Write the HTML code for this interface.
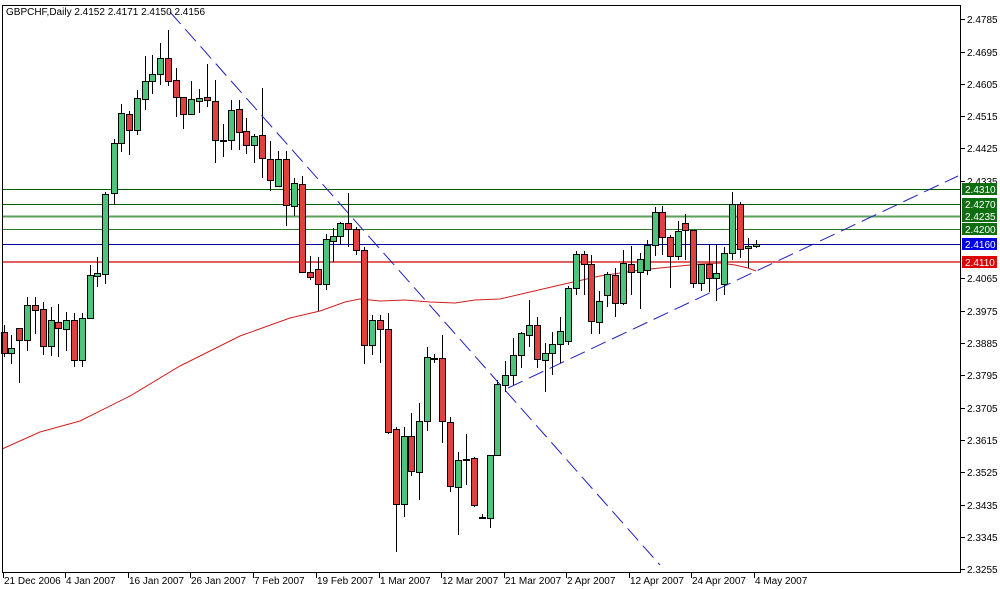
<!DOCTYPE html>
<html><head><meta charset="utf-8"><style>
html,body{margin:0;padding:0;background:#fff;width:1000px;height:589px;overflow:hidden}
svg{display:block}
text{font-family:"Liberation Sans",sans-serif;font-size:10px;fill:#000}
</style></head><body>
<svg id="s" width="1000" height="589" viewBox="0 0 1000 589" xmlns="http://www.w3.org/2000/svg" shape-rendering="crispEdges">
<rect x="0" y="0" width="1000" height="589" fill="#fff"/>
<g id="lines">
<line x1="2" y1="189.5" x2="961" y2="189.5" stroke="#006000"/>
<line x1="2" y1="204.5" x2="961" y2="204.5" stroke="#006000"/>
<line x1="2" y1="216.5" x2="961" y2="216.5" stroke="#5aa05a" stroke-width="2"/>
<line x1="2" y1="229.5" x2="961" y2="229.5" stroke="#2a7a2a"/>
<line x1="2" y1="244.5" x2="961" y2="244.5" stroke="#0000a0"/>
<line x1="2" y1="262" x2="961" y2="262" stroke="#e06060" stroke-width="2"/>
</g>
<polyline shape-rendering="auto" fill="none" stroke="#d02020" stroke-width="1" points="2,449 40,432 80,421 130,396 180,366 240,336 290,318 320,311 345,302 360,299 380,301 405,300 430,302 455,303 475,300 500,299 530,292 560,285 600,276 640,270 680,266 700,264 720,263 735,265 748,268 756,271"/>
<g id="c"></g>
<line shape-rendering="auto" x1="170" y1="12" x2="660" y2="565" stroke="#2020c0" stroke-dasharray="16,7"/>
<line shape-rendering="auto" x1="508" y1="388" x2="958" y2="176" stroke="#2020c0" stroke-dasharray="16,7"/>
<rect x="2.5" y="5.5" width="958" height="567" fill="none" stroke="#000"/>
<text x="6" y="15">GBPCHF,Daily  2.4152 2.4171 2.4150 2.4156</text>
<g id="ax"></g>
<g>
<text x="4" y="584">21 Dec 2006</text>
<text x="66" y="584">4 Jan 2007</text>
<text x="129" y="584">16 Jan 2007</text>
<text x="191" y="584">26 Jan 2007</text>
<text x="254" y="584">7 Feb 2007</text>
<text x="317" y="584">19 Feb 2007</text>
<text x="380" y="584">1 Mar 2007</text>
<text x="442" y="584">12 Mar 2007</text>
<text x="505" y="584">21 Mar 2007</text>
<text x="567" y="584">2 Apr 2007</text>
<text x="630" y="584">12 Apr 2007</text>
<text x="692" y="584">24 Apr 2007</text>
<text x="755" y="584">4 May 2007</text>
</g>
</svg>
<script>
var NS="http://www.w3.org/2000/svg";
function el(p,t,a,txt){var e=document.createElementNS(NS,t);for(var k in a)e.setAttribute(k,a[k]);if(txt)e.textContent=txt;p.appendChild(e);return e;}
var C=[
[4,332,353,325,357,'r'],[11,348,353,335,364,'g'],[19,328,340,328,383,'r'],[27,305,340,297,351,'g'],[35,305,310,297,334,'r'],[43,309,346,302,355,'r'],[51,320,346,307,356,'g'],[58,322,328,304,357,'r'],[66,320,329,312,351,'g'],[74,320,360,313,367,'r'],[82,318,360,313,367,'g'],[90,275,318,265,319,'g'],[97,273,276,257,287,'g'],[105,194,274,192,284,'g'],[114,143,193,139,205,'g'],[121,113,143,104,152,'g'],[129,114,130,111,155,'r'],[137,98,130,90,135,'g'],[145,81,99,56,110,'g'],[152,74,81,55,94,'g'],[160,58,74,43,85,'g'],[168,58,81,30,86,'r'],[176,80,97,68,117,'r'],[183,97,114,98,129,'r'],[191,99,114,81,115,'g'],[199,98,101,89,113,'g'],[207,97,100,64,107,'r'],[215,101,140,80,163,'r'],[223,140,141,124,157,'g'],[231,110,140,100,150,'g'],[239,109,132,100,150,'r'],[246,131,145,118,154,'r'],[254,136,145,134,163,'g'],[262,135,158,88,178,'r'],[270,159,180,141,191,'r'],[278,159,186,151,186,'g'],[286,159,205,151,226,'r'],[294,183,206,178,216,'g'],[302,184,272,176,273,'r'],[310,272,277,256,280,'r'],[318,269,284,257,311,'r'],[326,239,284,234,290,'g'],[333,236,241,228,262,'g'],[340,223,236,222,245,'g'],[348,223,229,193,247,'r'],[356,229,250,227,255,'r'],[364,250,345,247,364,'r'],[372,320,345,315,355,'g'],[380,320,329,315,363,'r'],[388,329,432,313,434,'r'],[396,429,504,427,552,'r'],[404,436,504,427,517,'g'],[411,436,471,413,476,'r'],[419,421,472,403,500,'g'],[427,357,421,347,431,'g'],[434,358,359,354,363,'g'],[442,358,421,335,443,'r'],[450,422,486,417,492,'r'],[458,460,487,452,535,'g'],[466,459,460,434,485,'g'],[474,458,505,457,507,'r'],[482,517,518,514,519,'g'],[490,455,518,455,528,'g'],
[497,384,455,380,456,'g'],[505,375,385,361,392,'g'],[513,355,375,338,385,'g'],[521,333,355,332,368,'g'],[529,325,335,300,347,'g'],[537,325,359,317,368,'r'],[545,353,360,343,392,'g'],[552,344,353,332,375,'g'],[560,331,344,317,363,'g'],[568,288,341,286,345,'g'],[576,254,288,251,295,'g'],[584,254,264,251,295,'r'],[591,264,321,255,334,'r'],[599,301,322,291,334,'g'],[607,274,295,272,307,'g'],[615,275,303,268,317,'r'],[623,263,303,250,305,'g'],[631,264,272,246,295,'r'],[640,259,272,253,309,'g'],[647,245,270,240,275,'g'],[655,212,245,207,256,'g'],[662,212,237,206,255,'r'],[670,237,256,235,288,'r'],[678,231,256,221,260,'g'],[685,223,230,214,260,'r'],[693,230,283,230,288,'r'],[701,264,283,264,291,'g'],[709,264,278,244,292,'r'],[716,273,278,244,301,'g'],[724,253,284,247,295,'g'],[732,204,253,192,260,'g'],[740,204,249,202,258,'r'],[748,246,248,238,268,'g'],[756,244,246,240,248,'g']
];
var g=document.getElementById('c');
C.forEach(function(c){
 el(g,'line',{x1:c[0]+.5,x2:c[0]+.5,y1:c[3],y2:c[4],stroke:'#000'});
 var h=Math.max(c[2]-c[1],1);
 el(g,'rect',{x:c[0]-2.5,y:c[1]+.5,width:6,height:h,fill:c[5]=='g'?'#4cc47a':'#e04040',stroke:'#000'});
});
var ax=document.getElementById('ax');
var P=[['2.4785',19],['2.4695',52],['2.4605',84],['2.4515',116],['2.4425',148],['2.4335',181],['2.4065',278],['2.3975',311],['2.3885',343],['2.3795',375],['2.3705',408],['2.3615',440],['2.3525',472],['2.3435',505],['2.3345',537],['2.3255',569]];
P.forEach(function(p){el(ax,'line',{x1:961,x2:965,y1:p[1]+.5,y2:p[1]+.5,stroke:'#000'});el(ax,'text',{x:967,y:p[1]+4},p[0]);});
var L=[['2.4310',189,'#0f6e0f'],['2.4270',204,'#0f6e0f'],['2.4235',216,'#0f6e0f'],['2.4200',229,'#0f6e0f'],['2.4160',244,'#0000e0'],['2.4110',262,'#e00000']];
L.forEach(function(p){el(ax,'rect',{x:962,y:p[1]-6,width:35,height:12,fill:p[2]});el(ax,'text',{x:965,y:p[1]+4,style:'fill:#fff'},p[0]);});
[3,65,128,190,253,316,379,441,504,566,629,691,754].forEach(function(x){el(ax,'line',{x1:x+.5,x2:x+.5,y1:573,y2:578,stroke:'#000'});});
</script>
</body></html>
